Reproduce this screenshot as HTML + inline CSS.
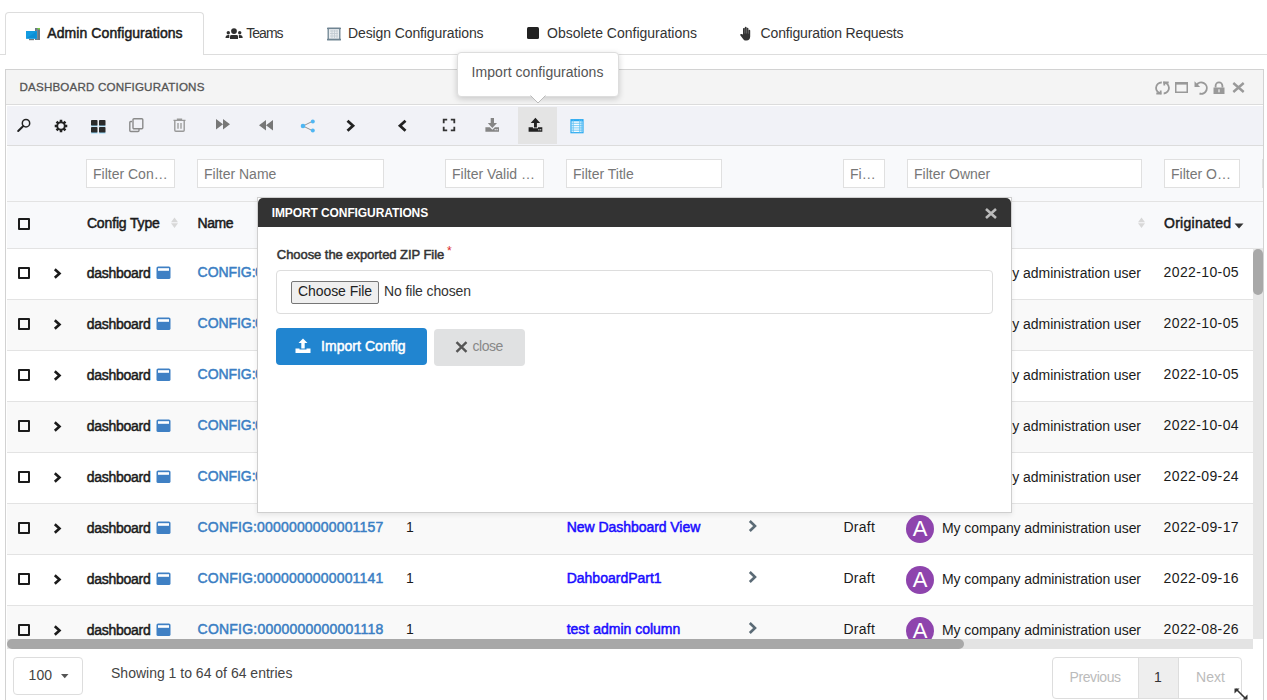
<!DOCTYPE html><html><head><meta charset="utf-8"><style>
html,body{margin:0;padding:0;width:1267px;height:700px;overflow:hidden;background:#fff;font-family:"Liberation Sans",sans-serif}
.a{position:absolute}
.t{position:absolute;white-space:nowrap;line-height:1}
svg.a{overflow:visible}
</style></head><body>
<div class="a" style="left:0;top:54px;width:1267px;height:1px;background:#ddd"></div>
<div class="a" style="left:5px;top:12px;width:199px;height:43px;border:1px solid #ddd;border-bottom:none;border-radius:4px 4px 0 0;background:#fff;box-sizing:border-box"></div>
<div class="t" style="left:47.30px;top:26.15px;font-size:14px;color:#1b1b1b;-webkit-text-stroke:0.5px #1b1b1b;letter-spacing:0.077px;">Admin Configurations</div>
<div class="t" style="left:246.20px;top:26.15px;font-size:14px;color:#333;letter-spacing:-0.958px;">Teams</div>
<div class="t" style="left:348.00px;top:26.15px;font-size:14px;color:#333;letter-spacing:-0.107px;">Design Configurations</div>
<div class="t" style="left:547.00px;top:26.15px;font-size:14px;color:#333;letter-spacing:-0.009px;">Obsolete Configurations</div>
<div class="t" style="left:760.60px;top:26.15px;font-size:14px;color:#333;letter-spacing:-0.157px;">Configuration Requests</div>
<svg class="a" style="left:25px;top:27px" width="16" height="14" viewBox="0 0 16 14">
<rect x="10" y="1" width="5" height="12" fill="#6b7884"/><rect x="12.5" y="1" width="2.5" height="1.5" fill="#7bd33c"/><rect x="11.5" y="2.5" width="1" height="10" fill="#8996a0"/>
<rect x="1" y="4" width="11" height="7.8" fill="#139be0"/><path d="M1.5 11.3L11.5 4.5V11.3Z" fill="#0c8fd6"/><rect x="4" y="12" width="5" height="1.2" fill="#777"/></svg>
<svg class="a" style="left:225px;top:27px" width="19" height="13" viewBox="0 0 19 13">
<circle cx="9" cy="4.1" r="2.9" fill="#2f2f2f"/><path d="M5 12V9.3Q5 7.9 6.5 7.9H11.5Q13 7.9 13 9.3V12Z" fill="#2f2f2f"/>
<circle cx="3.3" cy="5.8" r="1.7" fill="#2f2f2f"/><path d="M0.5 11Q0.5 8.2 3.3 8.1L4.3 8.1V11Z" fill="#2f2f2f"/>
<circle cx="14.7" cy="5.8" r="1.7" fill="#2f2f2f"/><path d="M17.7 11Q17.7 8.2 14.9 8.1L13.9 8.1V11Z" fill="#2f2f2f"/></svg>
<svg class="a" style="left:327px;top:27px" width="14" height="14" viewBox="0 0 14 14">
<rect x="1" y="1" width="12" height="12" fill="#e9edf0"/><path d="M3 4h8M3 6.5h8M3 9h8M5 3v8M7.5 3v8M10 3v8" stroke="#c3ccd2" stroke-width="0.9"/>
<rect x="1.2" y="1.3" width="11.6" height="11.2" fill="none" stroke="#6f8492" stroke-width="1.3"/><rect x="0" y="0.8" width="14" height="1.3" fill="#6f8492"/><rect x="0" y="11.8" width="14" height="1.6" fill="#6f8492"/></svg>
<div class="a" style="left:527px;top:27px;width:12px;height:12px;background:#222;border-radius:1.5px"></div>
<svg class="a" style="left:740px;top:26px" width="13" height="15" viewBox="0 0 13 15">
<path d="M3 8.5V2.8a0.9 0.9 0 0 1 1.8 0V7.5V1.6a0.9 0.9 0 0 1 1.8 0V7.5V2.6a0.9 0.9 0 0 1 1.8 0V7.7V4.6a0.9 0.9 0 0 1 1.8 0V10.5c0 2.5-1.5 4-3.6 4H5.6C4.6 14.5 4 14 3.3 13.2L0.3 9.3a0.9 0.9 0 0 1 1.3-1.2z" fill="#333"/>
<path d="M4.8 7.5V3M6.6 7.5V2M8.4 7.7V3" stroke="#999" stroke-width="0.5"/></svg>
<div class="a" style="left:5px;top:69px;width:1259px;height:700px;border:1px solid #d2d2d2;box-sizing:border-box;background:#fff"></div>
<div class="a" style="left:6px;top:70px;width:1257px;height:34px;background:#f4f4f4"></div>
<div class="a" style="left:6px;top:104px;width:1257px;height:1px;background:#dcdcdc"></div>
<div class="t" style="left:19.50px;top:81.18px;font-size:11.6px;color:#555;-webkit-text-stroke:0.3px #555;letter-spacing:0.179px;">DASHBOARD CONFIGURATIONS</div>
<div class="a" style="left:7px;top:105px;width:1256px;height:1px;background:#fff"></div>
<div class="a" style="left:7px;top:106px;width:1256px;height:39px;background:#f1f2f7"></div>
<div class="a" style="left:7px;top:145px;width:1256px;height:1px;background:#dcdcdc"></div>
<div class="a" style="left:7px;top:146px;width:1256px;height:102px;background:#f8f9fb;border-top-left-radius:3px"></div>
<div class="a" style="left:7px;top:201px;width:1256px;height:1px;background:#e3e3e3"></div>
<div class="a" style="left:7px;top:248px;width:1256px;height:1px;background:#e3e3e3"></div>
<div class="a" style="left:86px;top:159px;width:89px;height:29px;background:#fff;border:1px solid #e0e0e0;box-sizing:border-box"></div>
<div class="t" style="left:93.00px;top:167.35px;font-size:14px;color:#777;">Filter Con…</div>
<div class="a" style="left:197px;top:159px;width:187px;height:29px;background:#fff;border:1px solid #e0e0e0;box-sizing:border-box"></div>
<div class="t" style="left:204.00px;top:167.35px;font-size:14px;color:#777;">Filter Name</div>
<div class="a" style="left:445px;top:159px;width:99px;height:29px;background:#fff;border:1px solid #e0e0e0;box-sizing:border-box"></div>
<div class="t" style="left:452.00px;top:167.35px;font-size:14px;color:#777;">Filter Valid …</div>
<div class="a" style="left:566px;top:159px;width:156px;height:29px;background:#fff;border:1px solid #e0e0e0;box-sizing:border-box"></div>
<div class="t" style="left:573.00px;top:167.35px;font-size:14px;color:#777;">Filter Title</div>
<div class="a" style="left:843px;top:159px;width:42px;height:29px;background:#fff;border:1px solid #e0e0e0;box-sizing:border-box"></div>
<div class="t" style="left:850.00px;top:167.35px;font-size:14px;color:#777;">Fi…</div>
<div class="a" style="left:907px;top:159px;width:235px;height:29px;background:#fff;border:1px solid #e0e0e0;box-sizing:border-box"></div>
<div class="t" style="left:914.00px;top:167.35px;font-size:14px;color:#777;">Filter Owner</div>
<div class="a" style="left:1164px;top:159px;width:76px;height:29px;background:#fff;border:1px solid #e0e0e0;box-sizing:border-box"></div>
<div class="t" style="left:1171.00px;top:167.35px;font-size:14px;color:#777;">Filter O…</div>
<div class="a" style="left:1262px;top:159px;width:1px;height:29px;background:#e0e0e0"></div>
<div class="a" style="left:518px;top:107px;width:39px;height:37px;background:#e4e4e4"></div>
<svg class="a" style="left:16px;top:117px" width="16" height="16" viewBox="0 0 16 16"><circle cx="10" cy="6.2" r="3.7" fill="none" stroke="#222" stroke-width="1.5"/><path d="M7.3 9L2.2 14" stroke="#222" stroke-width="2" stroke-linecap="round"/></svg>
<svg class="a" style="left:54px;top:119px" width="14" height="14" viewBox="0 0 14 14"><path d="M13.27,5.73 L13.27,8.27 L11.53,8.25 L11.09,9.32 L12.33,10.54 L10.54,12.33 L9.32,11.09 L8.25,11.53 L8.27,13.27 L5.73,13.27 L5.75,11.53 L4.68,11.09 L3.46,12.33 L1.67,10.54 L2.91,9.32 L2.47,8.25 L0.73,8.27 L0.73,5.73 L2.47,5.75 L2.91,4.68 L1.67,3.46 L3.46,1.67 L4.68,2.91 L5.75,2.47 L5.73,0.73 L8.27,0.73 L8.25,2.47 L9.32,2.91 L10.54,1.67 L12.33,3.46 L11.09,4.68 L11.53,5.75Z" fill="#222"/><circle cx="7" cy="7" r="2.8" fill="#f1f2f7"/></svg>
<svg class="a" style="left:91px;top:120px" width="15" height="13" viewBox="0 0 15 13"><rect x="0" y="0" width="6.5" height="5.8" rx="0.8" fill="#2b2b2b"/><rect x="8" y="0" width="6.5" height="5.8" rx="0.8" fill="#2b2b2b"/><rect x="0" y="7" width="6.5" height="5.8" rx="0.8" fill="#2b2b2b"/><rect x="8" y="7" width="6.5" height="5.8" rx="0.8" fill="#2b2b2b"/><path d="M0 6h6.5M8 6h6.5M0 13h6.5M8 13h6.5" stroke="#5ac8fa" stroke-width="0.6"/></svg>
<svg class="a" style="left:129px;top:118px" width="15" height="14" viewBox="0 0 15 14"><path d="M3 3.5H1.8a1 1 0 0 0-1 1V12.5a1 1 0 0 0 1 1H9a1 1 0 0 0 1-1V11" fill="none" stroke="#8a8a8a" stroke-width="1.4"/><rect x="4" y="0.7" width="9.8" height="10" rx="1" fill="none" stroke="#8a8a8a" stroke-width="1.4"/></svg>
<svg class="a" style="left:173px;top:118px" width="13" height="14" viewBox="0 0 13 14"><path d="M0.5 2.3H12.5M4.5 2.3V1.2h4v1.1" fill="none" stroke="#999" stroke-width="1.3"/><path d="M1.8 2.8V12.3a1 1 0 0 0 1 1h7.4a1 1 0 0 0 1-1V2.8" fill="none" stroke="#999" stroke-width="1.4"/><path d="M5 5V10.8M8 5V10.8" stroke="#999" stroke-width="1.3"/></svg>
<svg class="a" style="left:216px;top:119px" width="14" height="11" viewBox="0 0 14 11"><path d="M0 0L7 5.3L0 10.6Z M7 0L14 5.3L7 10.6Z" fill="#777"/></svg>
<svg class="a" style="left:259px;top:120px" width="14" height="11" viewBox="0 0 14 11"><path d="M14 0V10.5L7 5.3Z M7 0V10.5L0 5.3Z" fill="#777"/></svg>
<svg class="a" style="left:300px;top:119px" width="16" height="14" viewBox="0 0 16 14"><path d="M3 7L12.5 2.3M3 7L12.5 11.7" stroke="#888" stroke-width="0.9"/><circle cx="3" cy="7" r="2.3" fill="#4fb6f2"/><circle cx="12.8" cy="2.4" r="2" fill="#4fb6f2"/><circle cx="12.8" cy="11.6" r="2" fill="#4fb6f2"/></svg>
<svg class="a" style="left:345px;top:119px" width="11" height="14" viewBox="0 0 11 14"><path d="M2.5 1.8L8 6.8L2.5 11.8" fill="none" stroke="#222" stroke-width="2.8"/></svg>
<svg class="a" style="left:397px;top:119px" width="11" height="14" viewBox="0 0 11 14"><path d="M8.5 1.8L3 6.8L8.5 11.8" fill="none" stroke="#222" stroke-width="2.8"/></svg>
<svg class="a" style="left:442px;top:118px" width="14" height="14" viewBox="0 0 14 14"><path d="M1.7 5.2V1.7H5.2M8.8 1.7H12.3V5.2M12.3 8.8V12.3H8.8M5.2 12.3H1.7V8.8" fill="none" stroke="#333" stroke-width="1.8"/></svg>
<svg class="a" style="left:480px;top:113px" width="25" height="25" viewBox="0 0 25 25"><path d="M10.7 5H14V9.9H17L12.35 15L7.8 9.9H10.7Z" fill="#858585"/><path d="M5.4 14.2H9.8L12.35 16.8L14.9 14.2H19V18.8H5.4Z" fill="#858585"/><rect x="14.6" y="16.2" width="1.3" height="1" fill="#f1f2f7"/><rect x="16.5" y="16.2" width="1.3" height="1" fill="#f1f2f7"/></svg>
<svg class="a" style="left:525px;top:113px" width="20" height="22" viewBox="525 113 20 22"><path d="M535.4 117.8L540.2 122.9H536.9V127.5H534V122.9H530.7Z" fill="#222"/><path d="M528.6 127.3H532.9V128.3H538V127.3H542.3V131.8H528.6Z" fill="#222"/><rect x="538.2" y="129.3" width="1.3" height="1" fill="#e4e4e4"/><rect x="540" y="129.3" width="1.3" height="1" fill="#e4e4e4"/></svg>
<svg class="a" style="left:570px;top:119px" width="14" height="14" viewBox="0 0 14 14"><rect x="1" y="0.7" width="12" height="13" fill="#f4fbff" stroke="#2aa9f0" stroke-width="1.2"/><rect x="1" y="0.7" width="12" height="1.6" fill="#2aa9f0"/><path d="M1 4.3H13M1 6.6H13M1 8.9H13M1 11.2H13M3.2 0.7V13.5M9.7 0.7V13.5M11.3 0.7V13.5" stroke="#5cc0f4" stroke-width="0.8"/></svg>
<svg class="a" style="left:1155px;top:81px" width="15" height="14" viewBox="0 0 15 14"><path d="M6.8 1.5A5.5 5.5 0 0 0 6.3 12.5" fill="none" stroke="#999" stroke-width="1.8"/><path d="M1.3 12.5H5.7V9.6" fill="none" stroke="#999" stroke-width="1.8"/><path d="M8.2 1.5A5.5 5.5 0 0 1 8.7 12.5" fill="none" stroke="#999" stroke-width="1.8"/><path d="M13.7 1.5H9.3V4.4" fill="none" stroke="#999" stroke-width="1.8"/></svg>
<svg class="a" style="left:1175px;top:82px" width="13" height="11" viewBox="0 0 13 11"><rect x="0.75" y="0.75" width="11.5" height="9.5" fill="none" stroke="#999" stroke-width="1.5"/><rect x="0" y="0" width="13" height="2.6" fill="#999"/></svg>
<svg class="a" style="left:1194px;top:81px" width="15" height="14" viewBox="0 0 15 14"><path d="M2.5 4.2A5.6 5.6 0 1 1 5.5 12.5" fill="none" stroke="#999" stroke-width="1.9"/><path d="M0.5 0.3V6H6.2Z" fill="#999"/></svg>
<svg class="a" style="left:1213px;top:82px" width="12" height="12" viewBox="0 0 12 12"><path d="M2.6 5.5V3.8a3.4 3.4 0 0 1 6.8 0V5.5" fill="none" stroke="#999" stroke-width="1.8"/><rect x="0.5" y="5.5" width="11" height="6.5" fill="#999"/><rect x="5.4" y="7.3" width="1.2" height="3" fill="#f4f4f4"/></svg>
<svg class="a" style="left:1232px;top:82px" width="13" height="11" viewBox="0 0 13 11"><path d="M1.3 1L11.7 10M11.7 1L1.3 10" stroke="#999" stroke-width="2.4"/></svg>
<div class="a" style="left:18px;top:218px;width:12px;height:12px;border:2px solid #1b1b1b;box-sizing:border-box;border-radius:1px"></div>
<div class="t" style="left:86.90px;top:216.15px;font-size:14px;color:#1b1b1b;-webkit-text-stroke:0.5px #1b1b1b;letter-spacing:-0.145px;">Config Type</div>
<svg class="a" style="left:171px;top:217px" width="8" height="12" viewBox="0 0 8 12"><path d="M3.5 0.5L7 5.3H0Z M3.5 11L7 6.2H0Z" fill="#d8d8d8"/></svg>
<div class="t" style="left:197.60px;top:216.15px;font-size:14px;color:#1b1b1b;-webkit-text-stroke:0.5px #1b1b1b;letter-spacing:-0.448px;">Name</div>
<svg class="a" style="left:1138px;top:217px" width="8" height="12" viewBox="0 0 8 12"><path d="M3.5 0.5L7 5.3H0Z M3.5 11L7 6.2H0Z" fill="#d8d8d8"/></svg>
<div class="t" style="left:1164.00px;top:216.15px;font-size:14px;color:#1b1b1b;-webkit-text-stroke:0.5px #1b1b1b;letter-spacing:0.268px;">Originated</div>
<svg class="a" style="left:1234px;top:223px" width="10" height="6" viewBox="0 0 10 6"><path d="M0.5 0.5H9.5L5 5.5Z" fill="#333"/></svg>
<div class="a" style="left:7px;top:249px;width:1246px;height:390px;overflow:hidden">
<div class="a" style="left:0;top:0px;width:1246px;height:51px;background:#fff"></div>
<div class="a" style="left:11px;top:18px;width:12px;height:12px;border:2px solid #1b1b1b;box-sizing:border-box;border-radius:1px"></div>
<svg class="a" style="left:46px;top:19px" width="9" height="12" viewBox="0 0 9 12"><path d="M1.8 1.2L6.5 5.5L1.8 9.8" fill="none" stroke="#1b1b1b" stroke-width="2.6"/></svg>
<div class="t" style="left:79.80px;top:17.15px;font-size:14px;color:#1b1b1b;-webkit-text-stroke:0.5px #1b1b1b;letter-spacing:-0.270px;">dashboard</div>
<svg class="a" style="left:149px;top:17px" width="15" height="13" viewBox="0 0 15 13"><rect x="0.5" y="0.5" width="14" height="12.5" rx="1.6" fill="#3f80c4"/><rect x="2" y="2.2" width="11" height="2.6" fill="#fff"/></svg>
<div class="t" style="left:190.60px;top:16.15px;font-size:14px;color:#3b7fc4;-webkit-text-stroke:0.5px #3b7fc4;letter-spacing:-0.055px;">CONFIG:</div>
<div class="t" style="left:248.20px;top:16.15px;font-size:14px;color:#3b7fc4;-webkit-text-stroke:0.5px #3b7fc4;">0</div>
<div class="t" style="left:399.00px;top:16.15px;font-size:14px;color:#1b1b1b;">1</div>
<div class="t" style="left:559.70px;top:16.15px;font-size:14px;color:#1a0dff;-webkit-text-stroke:0.5px #1a0dff;">Dashboard A</div>
<svg class="a" style="left:741px;top:15px" width="10" height="15" viewBox="0 0 10 15"><path d="M1.8 2L7 7L1.8 12" fill="none" stroke="#5b6b76" stroke-width="2.6"/></svg>
<div class="t" style="left:836.50px;top:16.15px;font-size:14px;color:#1b1b1b;letter-spacing:0.241px;">Draft</div>
<div class="a" style="left:899px;top:11px;width:28px;height:28px;border-radius:50%;background:#8e44ad;color:#fff;font-size:22px;line-height:28px;text-align:center">A</div>
<div class="t" style="left:1005.20px;top:17.15px;font-size:14px;color:#1b1b1b;letter-spacing:-0.018px;">y administration user</div>
<div class="t" style="left:1156.60px;top:16.15px;font-size:14px;color:#1b1b1b;letter-spacing:0.377px;">2022-10-05</div>
<div class="a" style="left:0;top:51px;width:1246px;height:51px;background:#f9f9f9"></div>
<div class="a" style="left:0;top:50px;width:1246px;height:1px;background:#e3e3e3"></div>
<div class="a" style="left:11px;top:69px;width:12px;height:12px;border:2px solid #1b1b1b;box-sizing:border-box;border-radius:1px"></div>
<svg class="a" style="left:46px;top:70px" width="9" height="12" viewBox="0 0 9 12"><path d="M1.8 1.2L6.5 5.5L1.8 9.8" fill="none" stroke="#1b1b1b" stroke-width="2.6"/></svg>
<div class="t" style="left:79.80px;top:68.15px;font-size:14px;color:#1b1b1b;-webkit-text-stroke:0.5px #1b1b1b;letter-spacing:-0.270px;">dashboard</div>
<svg class="a" style="left:149px;top:68px" width="15" height="13" viewBox="0 0 15 13"><rect x="0.5" y="0.5" width="14" height="12.5" rx="1.6" fill="#3f80c4"/><rect x="2" y="2.2" width="11" height="2.6" fill="#fff"/></svg>
<div class="t" style="left:190.60px;top:67.15px;font-size:14px;color:#3b7fc4;-webkit-text-stroke:0.5px #3b7fc4;letter-spacing:-0.055px;">CONFIG:</div>
<div class="t" style="left:248.20px;top:67.15px;font-size:14px;color:#3b7fc4;-webkit-text-stroke:0.5px #3b7fc4;">0</div>
<div class="t" style="left:399.00px;top:67.15px;font-size:14px;color:#1b1b1b;">1</div>
<div class="t" style="left:559.70px;top:67.15px;font-size:14px;color:#1a0dff;-webkit-text-stroke:0.5px #1a0dff;">Dashboard B</div>
<svg class="a" style="left:741px;top:66px" width="10" height="15" viewBox="0 0 10 15"><path d="M1.8 2L7 7L1.8 12" fill="none" stroke="#5b6b76" stroke-width="2.6"/></svg>
<div class="t" style="left:836.50px;top:67.15px;font-size:14px;color:#1b1b1b;letter-spacing:0.241px;">Draft</div>
<div class="a" style="left:899px;top:62px;width:28px;height:28px;border-radius:50%;background:#8e44ad;color:#fff;font-size:22px;line-height:28px;text-align:center">A</div>
<div class="t" style="left:1005.20px;top:68.15px;font-size:14px;color:#1b1b1b;letter-spacing:-0.018px;">y administration user</div>
<div class="t" style="left:1156.60px;top:67.15px;font-size:14px;color:#1b1b1b;letter-spacing:0.377px;">2022-10-05</div>
<div class="a" style="left:0;top:102px;width:1246px;height:51px;background:#fff"></div>
<div class="a" style="left:0;top:101px;width:1246px;height:1px;background:#e3e3e3"></div>
<div class="a" style="left:11px;top:120px;width:12px;height:12px;border:2px solid #1b1b1b;box-sizing:border-box;border-radius:1px"></div>
<svg class="a" style="left:46px;top:121px" width="9" height="12" viewBox="0 0 9 12"><path d="M1.8 1.2L6.5 5.5L1.8 9.8" fill="none" stroke="#1b1b1b" stroke-width="2.6"/></svg>
<div class="t" style="left:79.80px;top:119.15px;font-size:14px;color:#1b1b1b;-webkit-text-stroke:0.5px #1b1b1b;letter-spacing:-0.270px;">dashboard</div>
<svg class="a" style="left:149px;top:119px" width="15" height="13" viewBox="0 0 15 13"><rect x="0.5" y="0.5" width="14" height="12.5" rx="1.6" fill="#3f80c4"/><rect x="2" y="2.2" width="11" height="2.6" fill="#fff"/></svg>
<div class="t" style="left:190.60px;top:118.15px;font-size:14px;color:#3b7fc4;-webkit-text-stroke:0.5px #3b7fc4;letter-spacing:-0.055px;">CONFIG:</div>
<div class="t" style="left:248.20px;top:118.15px;font-size:14px;color:#3b7fc4;-webkit-text-stroke:0.5px #3b7fc4;">0</div>
<div class="t" style="left:399.00px;top:118.15px;font-size:14px;color:#1b1b1b;">1</div>
<div class="t" style="left:559.70px;top:118.15px;font-size:14px;color:#1a0dff;-webkit-text-stroke:0.5px #1a0dff;">Dashboard C</div>
<svg class="a" style="left:741px;top:117px" width="10" height="15" viewBox="0 0 10 15"><path d="M1.8 2L7 7L1.8 12" fill="none" stroke="#5b6b76" stroke-width="2.6"/></svg>
<div class="t" style="left:836.50px;top:118.15px;font-size:14px;color:#1b1b1b;letter-spacing:0.241px;">Draft</div>
<div class="a" style="left:899px;top:113px;width:28px;height:28px;border-radius:50%;background:#8e44ad;color:#fff;font-size:22px;line-height:28px;text-align:center">A</div>
<div class="t" style="left:1005.20px;top:119.15px;font-size:14px;color:#1b1b1b;letter-spacing:-0.018px;">y administration user</div>
<div class="t" style="left:1156.60px;top:118.15px;font-size:14px;color:#1b1b1b;letter-spacing:0.377px;">2022-10-05</div>
<div class="a" style="left:0;top:153px;width:1246px;height:51px;background:#f9f9f9"></div>
<div class="a" style="left:0;top:152px;width:1246px;height:1px;background:#e3e3e3"></div>
<div class="a" style="left:11px;top:171px;width:12px;height:12px;border:2px solid #1b1b1b;box-sizing:border-box;border-radius:1px"></div>
<svg class="a" style="left:46px;top:172px" width="9" height="12" viewBox="0 0 9 12"><path d="M1.8 1.2L6.5 5.5L1.8 9.8" fill="none" stroke="#1b1b1b" stroke-width="2.6"/></svg>
<div class="t" style="left:79.80px;top:170.15px;font-size:14px;color:#1b1b1b;-webkit-text-stroke:0.5px #1b1b1b;letter-spacing:-0.270px;">dashboard</div>
<svg class="a" style="left:149px;top:170px" width="15" height="13" viewBox="0 0 15 13"><rect x="0.5" y="0.5" width="14" height="12.5" rx="1.6" fill="#3f80c4"/><rect x="2" y="2.2" width="11" height="2.6" fill="#fff"/></svg>
<div class="t" style="left:190.60px;top:169.15px;font-size:14px;color:#3b7fc4;-webkit-text-stroke:0.5px #3b7fc4;letter-spacing:-0.055px;">CONFIG:</div>
<div class="t" style="left:248.20px;top:169.15px;font-size:14px;color:#3b7fc4;-webkit-text-stroke:0.5px #3b7fc4;">0</div>
<div class="t" style="left:399.00px;top:169.15px;font-size:14px;color:#1b1b1b;">1</div>
<div class="t" style="left:559.70px;top:169.15px;font-size:14px;color:#1a0dff;-webkit-text-stroke:0.5px #1a0dff;">Dashboard D</div>
<svg class="a" style="left:741px;top:168px" width="10" height="15" viewBox="0 0 10 15"><path d="M1.8 2L7 7L1.8 12" fill="none" stroke="#5b6b76" stroke-width="2.6"/></svg>
<div class="t" style="left:836.50px;top:169.15px;font-size:14px;color:#1b1b1b;letter-spacing:0.241px;">Draft</div>
<div class="a" style="left:899px;top:164px;width:28px;height:28px;border-radius:50%;background:#8e44ad;color:#fff;font-size:22px;line-height:28px;text-align:center">A</div>
<div class="t" style="left:1005.20px;top:170.15px;font-size:14px;color:#1b1b1b;letter-spacing:-0.018px;">y administration user</div>
<div class="t" style="left:1156.60px;top:169.15px;font-size:14px;color:#1b1b1b;letter-spacing:0.377px;">2022-10-04</div>
<div class="a" style="left:0;top:204px;width:1246px;height:51px;background:#fff"></div>
<div class="a" style="left:0;top:203px;width:1246px;height:1px;background:#e3e3e3"></div>
<div class="a" style="left:11px;top:222px;width:12px;height:12px;border:2px solid #1b1b1b;box-sizing:border-box;border-radius:1px"></div>
<svg class="a" style="left:46px;top:223px" width="9" height="12" viewBox="0 0 9 12"><path d="M1.8 1.2L6.5 5.5L1.8 9.8" fill="none" stroke="#1b1b1b" stroke-width="2.6"/></svg>
<div class="t" style="left:79.80px;top:221.15px;font-size:14px;color:#1b1b1b;-webkit-text-stroke:0.5px #1b1b1b;letter-spacing:-0.270px;">dashboard</div>
<svg class="a" style="left:149px;top:221px" width="15" height="13" viewBox="0 0 15 13"><rect x="0.5" y="0.5" width="14" height="12.5" rx="1.6" fill="#3f80c4"/><rect x="2" y="2.2" width="11" height="2.6" fill="#fff"/></svg>
<div class="t" style="left:190.60px;top:220.15px;font-size:14px;color:#3b7fc4;-webkit-text-stroke:0.5px #3b7fc4;letter-spacing:-0.055px;">CONFIG:</div>
<div class="t" style="left:248.20px;top:220.15px;font-size:14px;color:#3b7fc4;-webkit-text-stroke:0.5px #3b7fc4;">0</div>
<div class="t" style="left:399.00px;top:220.15px;font-size:14px;color:#1b1b1b;">1</div>
<div class="t" style="left:559.70px;top:220.15px;font-size:14px;color:#1a0dff;-webkit-text-stroke:0.5px #1a0dff;">Dashboard E</div>
<svg class="a" style="left:741px;top:219px" width="10" height="15" viewBox="0 0 10 15"><path d="M1.8 2L7 7L1.8 12" fill="none" stroke="#5b6b76" stroke-width="2.6"/></svg>
<div class="t" style="left:836.50px;top:220.15px;font-size:14px;color:#1b1b1b;letter-spacing:0.241px;">Draft</div>
<div class="a" style="left:899px;top:215px;width:28px;height:28px;border-radius:50%;background:#8e44ad;color:#fff;font-size:22px;line-height:28px;text-align:center">A</div>
<div class="t" style="left:1005.20px;top:221.15px;font-size:14px;color:#1b1b1b;letter-spacing:-0.018px;">y administration user</div>
<div class="t" style="left:1156.60px;top:220.15px;font-size:14px;color:#1b1b1b;letter-spacing:0.377px;">2022-09-24</div>
<div class="a" style="left:0;top:255px;width:1246px;height:51px;background:#f9f9f9"></div>
<div class="a" style="left:0;top:254px;width:1246px;height:1px;background:#e3e3e3"></div>
<div class="a" style="left:11px;top:273px;width:12px;height:12px;border:2px solid #1b1b1b;box-sizing:border-box;border-radius:1px"></div>
<svg class="a" style="left:46px;top:274px" width="9" height="12" viewBox="0 0 9 12"><path d="M1.8 1.2L6.5 5.5L1.8 9.8" fill="none" stroke="#1b1b1b" stroke-width="2.6"/></svg>
<div class="t" style="left:79.80px;top:272.15px;font-size:14px;color:#1b1b1b;-webkit-text-stroke:0.5px #1b1b1b;letter-spacing:-0.270px;">dashboard</div>
<svg class="a" style="left:149px;top:272px" width="15" height="13" viewBox="0 0 15 13"><rect x="0.5" y="0.5" width="14" height="12.5" rx="1.6" fill="#3f80c4"/><rect x="2" y="2.2" width="11" height="2.6" fill="#fff"/></svg>
<div class="t" style="left:190.60px;top:271.15px;font-size:14px;color:#3b7fc4;-webkit-text-stroke:0.5px #3b7fc4;letter-spacing:0.170px;">CONFIG:0000000000001157</div>
<div class="t" style="left:399.00px;top:271.15px;font-size:14px;color:#1b1b1b;">1</div>
<div class="t" style="left:559.70px;top:271.15px;font-size:14px;color:#1a0dff;-webkit-text-stroke:0.5px #1a0dff;letter-spacing:-0.045px;">New Dashboard View</div>
<svg class="a" style="left:741px;top:270px" width="10" height="15" viewBox="0 0 10 15"><path d="M1.8 2L7 7L1.8 12" fill="none" stroke="#5b6b76" stroke-width="2.6"/></svg>
<div class="t" style="left:836.50px;top:271.15px;font-size:14px;color:#1b1b1b;letter-spacing:0.241px;">Draft</div>
<div class="a" style="left:899px;top:266px;width:28px;height:28px;border-radius:50%;background:#8e44ad;color:#fff;font-size:22px;line-height:28px;text-align:center">A</div>
<div class="t" style="left:935.00px;top:272.15px;font-size:14px;color:#1b1b1b;letter-spacing:-0.087px;">My company administration user</div>
<div class="t" style="left:1156.60px;top:271.15px;font-size:14px;color:#1b1b1b;letter-spacing:0.377px;">2022-09-17</div>
<div class="a" style="left:0;top:306px;width:1246px;height:51px;background:#fff"></div>
<div class="a" style="left:0;top:305px;width:1246px;height:1px;background:#e3e3e3"></div>
<div class="a" style="left:11px;top:324px;width:12px;height:12px;border:2px solid #1b1b1b;box-sizing:border-box;border-radius:1px"></div>
<svg class="a" style="left:46px;top:325px" width="9" height="12" viewBox="0 0 9 12"><path d="M1.8 1.2L6.5 5.5L1.8 9.8" fill="none" stroke="#1b1b1b" stroke-width="2.6"/></svg>
<div class="t" style="left:79.80px;top:323.15px;font-size:14px;color:#1b1b1b;-webkit-text-stroke:0.5px #1b1b1b;letter-spacing:-0.270px;">dashboard</div>
<svg class="a" style="left:149px;top:323px" width="15" height="13" viewBox="0 0 15 13"><rect x="0.5" y="0.5" width="14" height="12.5" rx="1.6" fill="#3f80c4"/><rect x="2" y="2.2" width="11" height="2.6" fill="#fff"/></svg>
<div class="t" style="left:190.60px;top:322.15px;font-size:14px;color:#3b7fc4;-webkit-text-stroke:0.5px #3b7fc4;letter-spacing:0.170px;">CONFIG:0000000000001141</div>
<div class="t" style="left:399.00px;top:322.15px;font-size:14px;color:#1b1b1b;">1</div>
<div class="t" style="left:559.70px;top:322.15px;font-size:14px;color:#1a0dff;-webkit-text-stroke:0.5px #1a0dff;">DahboardPart1</div>
<svg class="a" style="left:741px;top:321px" width="10" height="15" viewBox="0 0 10 15"><path d="M1.8 2L7 7L1.8 12" fill="none" stroke="#5b6b76" stroke-width="2.6"/></svg>
<div class="t" style="left:836.50px;top:322.15px;font-size:14px;color:#1b1b1b;letter-spacing:0.241px;">Draft</div>
<div class="a" style="left:899px;top:317px;width:28px;height:28px;border-radius:50%;background:#8e44ad;color:#fff;font-size:22px;line-height:28px;text-align:center">A</div>
<div class="t" style="left:935.00px;top:323.15px;font-size:14px;color:#1b1b1b;letter-spacing:-0.087px;">My company administration user</div>
<div class="t" style="left:1156.60px;top:322.15px;font-size:14px;color:#1b1b1b;letter-spacing:0.377px;">2022-09-16</div>
<div class="a" style="left:0;top:357px;width:1246px;height:51px;background:#f9f9f9"></div>
<div class="a" style="left:0;top:356px;width:1246px;height:1px;background:#e3e3e3"></div>
<div class="a" style="left:11px;top:375px;width:12px;height:12px;border:2px solid #1b1b1b;box-sizing:border-box;border-radius:1px"></div>
<svg class="a" style="left:46px;top:376px" width="9" height="12" viewBox="0 0 9 12"><path d="M1.8 1.2L6.5 5.5L1.8 9.8" fill="none" stroke="#1b1b1b" stroke-width="2.6"/></svg>
<div class="t" style="left:79.80px;top:374.15px;font-size:14px;color:#1b1b1b;-webkit-text-stroke:0.5px #1b1b1b;letter-spacing:-0.270px;">dashboard</div>
<svg class="a" style="left:149px;top:374px" width="15" height="13" viewBox="0 0 15 13"><rect x="0.5" y="0.5" width="14" height="12.5" rx="1.6" fill="#3f80c4"/><rect x="2" y="2.2" width="11" height="2.6" fill="#fff"/></svg>
<div class="t" style="left:190.60px;top:373.15px;font-size:14px;color:#3b7fc4;-webkit-text-stroke:0.5px #3b7fc4;letter-spacing:0.217px;">CONFIG:0000000000001118</div>
<div class="t" style="left:399.00px;top:373.15px;font-size:14px;color:#1b1b1b;">1</div>
<div class="t" style="left:559.70px;top:373.15px;font-size:14px;color:#1a0dff;-webkit-text-stroke:0.5px #1a0dff;">test admin column</div>
<svg class="a" style="left:741px;top:372px" width="10" height="15" viewBox="0 0 10 15"><path d="M1.8 2L7 7L1.8 12" fill="none" stroke="#5b6b76" stroke-width="2.6"/></svg>
<div class="t" style="left:836.50px;top:373.15px;font-size:14px;color:#1b1b1b;letter-spacing:0.241px;">Draft</div>
<div class="a" style="left:899px;top:368px;width:28px;height:28px;border-radius:50%;background:#8e44ad;color:#fff;font-size:22px;line-height:28px;text-align:center">A</div>
<div class="t" style="left:935.00px;top:374.15px;font-size:14px;color:#1b1b1b;letter-spacing:-0.087px;">My company administration user</div>
<div class="t" style="left:1156.60px;top:373.15px;font-size:14px;color:#1b1b1b;letter-spacing:0.377px;">2022-08-26</div>
</div>
<div class="a" style="left:1253px;top:248px;width:10px;height:391px;background:#e6e6e6"></div>
<div class="a" style="left:1253px;top:249px;width:10px;height:46px;background:#a8a8a8;border-radius:5px"></div>
<div class="a" style="left:7px;top:639px;width:1246px;height:10px;background:#e3e3e3"></div>
<div class="a" style="left:7px;top:639px;width:957px;height:10px;background:#a8a8a8;border-radius:5px"></div>
<div class="a" style="left:13px;top:657px;width:70px;height:38px;border:1px solid #ddd;border-radius:4px;box-sizing:border-box;background:#fff"></div>
<div class="t" style="left:28.60px;top:668.15px;font-size:14px;color:#444;letter-spacing:0.022px;">100</div>
<svg class="a" style="left:61px;top:674px" width="8" height="5" viewBox="0 0 8 5"><path d="M0 0H7.5L3.75 4.2Z" fill="#555"/></svg>
<div class="t" style="left:111.00px;top:666.45px;font-size:14px;color:#444;letter-spacing:0.002px;">Showing 1 to 64 of 64 entries</div>
<div class="a" style="left:1052px;top:657px;width:190px;height:42px;border:1px solid #ddd;border-radius:4px;box-sizing:border-box;background:#fff"></div>
<div class="a" style="left:1138px;top:658px;width:41px;height:40px;background:#eee;border-left:1px solid #ddd;border-right:1px solid #ddd;box-sizing:border-box"></div>
<div class="t" style="left:1069.60px;top:670.15px;font-size:14px;color:#bbb;letter-spacing:-0.438px;">Previous</div>
<div class="t" style="left:1154.00px;top:670.15px;font-size:14px;color:#333;">1</div>
<div class="t" style="left:1196.00px;top:670.15px;font-size:14px;color:#bbb;letter-spacing:0.072px;">Next</div>
<svg class="a" style="left:1234px;top:688px" width="14" height="12" viewBox="0 0 14 12"><path d="M2 1L12 11" stroke="#333" stroke-width="1.6"/><path d="M0.5 0.5H5.5L0.5 5.5Z M13.5 11.5H8.5L13.5 6.5Z" fill="#333"/></svg>
<div class="a" style="left:457px;top:52px;width:162px;height:45px;background:#fff;border:1px solid #ddd;border-radius:4px;box-sizing:border-box;box-shadow:0 2px 6px rgba(0,0,0,.18)"></div>
<svg class="a" style="left:530px;top:95px" width="16" height="9" viewBox="0 0 16 9"><path d="M0 0L8 8L16 0" fill="#fff" stroke="#bbb" stroke-width="1"/><rect x="0" y="-1" width="16" height="1.5" fill="#fff"/></svg>
<div class="t" style="left:471.60px;top:64.95px;font-size:14px;color:#555;letter-spacing:0.054px;">Import configurations</div>
<div class="a" style="left:257px;top:197px;width:755px;height:316px;background:#fff;border:1px solid #cfcfcf;box-sizing:border-box;box-shadow:0 2px 5px rgba(0,0,0,.08)"></div>
<div class="a" style="left:258px;top:198px;width:753px;height:29px;background:#333;border-radius:5px 5px 0 0"></div>
<div class="t" style="left:271.70px;top:206.84px;font-size:12px;color:#fff;font-weight:bold;letter-spacing:-0.097px;">IMPORT CONFIGURATIONS</div>
<svg class="a" style="left:985px;top:208px" width="12" height="11" viewBox="0 0 12 11"><path d="M1 1L11 10M11 1L1 10" stroke="#bbb" stroke-width="2.6"/></svg>
<div class="t" style="left:276.80px;top:247.60px;font-size:13px;color:#333;-webkit-text-stroke:0.5px #333;letter-spacing:-0.053px;">Choose the exported ZIP File</div>
<div class="t" style="left:447.00px;top:245.14px;font-size:12px;color:#db2828;">*</div>
<div class="a" style="left:276px;top:270px;width:717px;height:44px;border:1px solid #ddd;border-radius:4px;box-sizing:border-box"></div>
<div class="a" style="left:291px;top:281px;width:88px;height:23px;background:#efefef;border:1px solid #767676;border-radius:2px;box-sizing:border-box"></div>
<div class="t" style="left:298.00px;top:284.15px;font-size:14px;color:#222;letter-spacing:-0.070px;">Choose File</div>
<div class="t" style="left:384.00px;top:284.15px;font-size:14px;color:#333;letter-spacing:-0.132px;">No file chosen</div>
<div class="a" style="left:276px;top:328px;width:151px;height:37px;background:#2185d0;border-radius:4px"></div>
<svg class="a" style="left:295px;top:338px" width="16" height="16" viewBox="0 0 16 16"><path d="M8 0.5L12.5 5H9.7V10.5H6.3V5H3.5Z" fill="#fff"/><path d="M0.5 10.5H4.5V11.5H11.5V10.5H15.5V15H0.5Z" fill="#fff"/></svg>
<div class="t" style="left:321.00px;top:338.95px;font-size:14px;color:#fff;-webkit-text-stroke:0.5px #fff;letter-spacing:0.048px;">Import Config</div>
<div class="a" style="left:434px;top:329px;width:91px;height:37px;background:#e0e1e2;border-radius:4px"></div>
<svg class="a" style="left:455px;top:341px" width="13" height="12" viewBox="0 0 13 12"><path d="M1.5 1.2L11.5 10.8M11.5 1.2L1.5 10.8" stroke="#555" stroke-width="2.4"/></svg>
<div class="t" style="left:472.60px;top:338.95px;font-size:14px;color:#888;letter-spacing:-0.520px;">close</div>
</body></html>
